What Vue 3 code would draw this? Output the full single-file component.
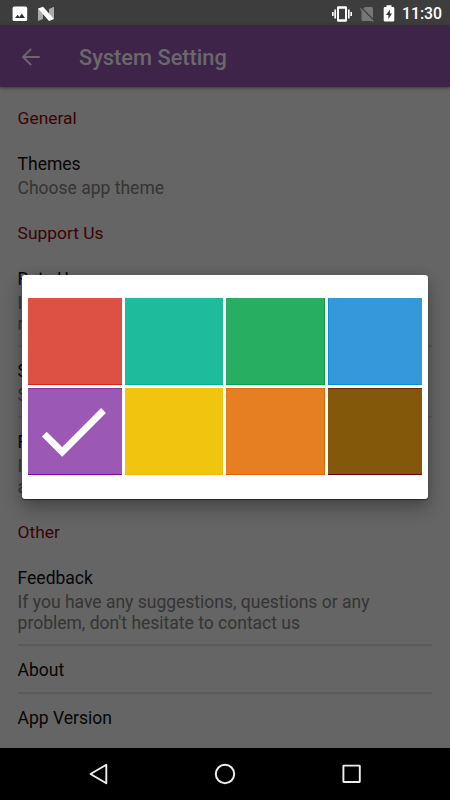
<script setup>
const sections = [
  { name: 'General', rows: [{ title: 'Themes', lines: ['Choose app theme'] }] },
  {
    name: 'Support Us',
    rows: [
      { title: 'Rate Us', lines: ['If you like this app, please', 'rate it'] },
      { title: 'Share', lines: ['Share this app'] },
      { title: 'Follow Us', lines: ['If you want news', 'about updates'] },
    ],
  },
  {
    name: 'Other',
    rows: [
      { title: 'Feedback', lines: ['If you have any suggestions, questions or any', "problem, don't hesitate to contact us"] },
      { title: 'About', lines: [] },
      { title: 'App Version', lines: [] },
    ],
  },
]
const themes = [
  { name: 'red', selected: false },
  { name: 'teal', selected: false },
  { name: 'green', selected: false },
  { name: 'blue', selected: false },
  { name: 'purple', selected: true },
  { name: 'yellow', selected: false },
  { name: 'orange', selected: false },
  { name: 'brown', selected: false },
]
</script>

<template>
  <div class="screen">
    <div class="status">
      <svg class="picture" width="16" height="16" viewBox="0 0 16 16">
        <rect x=".6" y=".6" width="14.6" height="14.4" rx="1.6" fill="#fff" />
        <path d="M3 12 5.6 8.8 7.4 11 9.8 7.6 13 12Z" fill="#333" />
      </svg>
      <svg class="nougat" width="18" height="16" viewBox="0 0 18 16">
        <path d="M1 2.5 6 6V13L1 15ZM12 3 17 .8V13L12 9.5Z" fill="#aaa" />
        <path d="M1 2.5 6 .7 17 13 12 15Z" fill="#fff" />
      </svg>
      <span class="spacer"></span>
      <svg class="vibrate" width="20" height="16" viewBox="0 0 20 16">
        <path fill-rule="evenodd" d="M6.4.2H13.6Q15 .2 15 1.6V14.4Q15 15.8 13.6 15.8H6.4Q5 15.8 5 14.4V1.6Q5 .2 6.4.2ZM7 2.8V13.2H13V2.8Z" fill="#fff" />
        <path d="M3.2 3.5V12.5M.8 6V10M16.8 3.5V12.5M19.2 6V10" stroke="#fff" stroke-width="1.7" />
      </svg>
      <svg class="sim" width="14" height="16" viewBox="0 0 14 16">
        <path d="M1.5 4.5 5 1H11.5Q13 1 13 2.5V15H3Q1.5 15 1.5 13.5Z" fill="#777" />
        <path d="M1 1.5 14 14.5" stroke="#3d3d3d" stroke-width="1.6" />
        <path d="M.3 2.5 13.3 15.5" stroke="#777" stroke-width="1.2" />
      </svg>
      <svg class="battery" width="12" height="17" viewBox="0 0 12 17">
        <path d="M3.5 2V.3H8.5V2H10Q11.3 2 11.3 3.3V15.2Q11.3 16.5 10 16.5H2Q.7 16.5.7 15.2V3.3Q.7 2 2 2Z" fill="#fff" />
        <path d="M7 4.5 3 9.9H5.4V14L9 8.5H6.8Z" fill="#333" />
      </svg>
      <span class="time">11:30</span>
    </div>
    <header class="toolbar">
      <svg width="20" height="20" viewBox="0 0 20 20">
        <path d="M18.7 10H2.5M10.2 1.8 2 10 10.2 18.2" fill="none" stroke="#6b6570" stroke-width="1.9" />
      </svg>
      <h1>System Setting</h1>
    </header>
    <main class="settings">
      <section v-for="section in sections" :key="section.name">
        <h2>{{ section.name }}</h2>
        <div v-for="row in section.rows" :key="row.title" class="row">
          <div class="title">{{ row.title }}</div>
          <div v-for="line in row.lines" :key="line" class="summary">{{ line }}</div>
        </div>
      </section>
    </main>
    <nav class="nav">
      <svg width="20" height="22" viewBox="0 0 20 22">
        <path d="M17.3 1.8V20.2L1.5 11Z" fill="none" stroke="#eee" stroke-width="1.9" stroke-linejoin="round" />
      </svg>
      <svg class="home" width="22" height="22" viewBox="0 0 22 22">
        <circle cx="11" cy="11" r="9.2" fill="none" stroke="#eee" stroke-width="2" />
      </svg>
      <svg width="20" height="20" viewBox="0 0 20 20">
        <rect x="1.4" y="1.6" width="16.4" height="16.4" rx=".4" fill="none" stroke="#eee" stroke-width="1.9" />
      </svg>
    </nav>
    <div class="dialog">
      <div v-for="theme in themes" :key="theme.name" class="swatch" :class="theme.name">
        <svg v-if="theme.selected" width="94" height="87" viewBox="0 0 94 87">
          <path d="M16.3 46.2 34.2 64 75.5 22.5" fill="none" stroke="#fff" stroke-width="6.8" />
        </svg>
      </div>
    </div>
  </div>
</template>

<style>
body {
  margin: 0;
  background: #666;
}
</style>

<style scoped>
.screen {
  position: relative;
  display: flex;
  flex-direction: column;
  width: 450px;
  height: 800px;
  overflow: hidden;
  background: #656565;
  font-family: Roboto, sans-serif;
}
.status {
  display: flex;
  align-items: center;
  box-sizing: border-box;
  height: 25px;
  flex: none;
  padding: 2px 8px 0 12px;
  background: #3d3d3d;
}
.nougat {
  margin-left: 9px;
}
.spacer {
  flex: 1;
}
.sim {
  margin-left: 8px;
}
.battery {
  margin-left: 9px;
}
.time {
  margin-left: 7px;
  color: #fff;
  font-size: 15.8px;
  font-weight: 500;
  line-height: 20px;
  width: 40px;
  white-space: nowrap;
}
.toolbar {
  display: flex;
  align-items: center;
  box-sizing: border-box;
  height: 62px;
  flex: none;
  padding: 2px 20px 0 21px;
  background: #3e2449;
  box-shadow: 0 1px 3px rgba(0, 0, 0, 0.45);
}
h1 {
  margin: 2px 0 0 38px;
  color: #6b686c;
  font-size: 21.8px;
  font-weight: 500;
  line-height: 28px;
}
.settings {
  flex: 1;
  min-height: 0;
  overflow: hidden;
  padding: 7px 18px 0 17.6px;
}
h2 {
  box-sizing: border-box;
  height: 46px;
  margin: 0;
  padding-top: 2px;
  color: #3b0303;
  font-size: 17.4px;
  font-weight: 400;
  line-height: 44px;
}
.row {
  padding: 13px 0 10px;
  white-space: nowrap;
}
.row + .row {
  border-top: 2px solid #5b5b5b;
}
.title {
  color: #060606;
  font-size: 17.5px;
  line-height: 23px;
}
.title + .summary {
  margin-top: 2px;
}
.summary {
  color: #343434;
  font-size: 17.5px;
  line-height: 21px;
}
.nav {
  display: flex;
  align-items: center;
  justify-content: space-between;
  box-sizing: border-box;
  height: 52px;
  flex: none;
  padding: 0 88px 0 89px;
  background: #000;
}
.home {
  margin-right: 1px;
}
.dialog {
  position: absolute;
  top: 275px;
  left: 22px;
  display: grid;
  grid-template-columns: 94px 98px 99px 94px;
  grid-template-rows: 87px 87px;
  gap: 3px;
  box-sizing: border-box;
  width: 406px;
  height: 224px;
  padding: 23px 6px;
  border-radius: 3px;
  background: #fff;
  box-shadow: 0 1px 1px rgba(0, 0, 0, 0.5), 0 10px 18px rgba(0, 0, 0, 0.27), 0 0 12px rgba(0, 0, 0, 0.12);
}
.swatch {
  box-sizing: border-box;
}
.swatch svg {
  display: block;
}
.red {
  background: #dd5044;
  box-shadow: inset 0 -1px #dc2410;
}
.teal {
  background: #1cbc9c;
  box-shadow: inset 0 -1px #08b18b;
}
.green {
  background: #28ae61;
  box-shadow: inset -1px -1px #08a33b;
}
.blue {
  background: #3598db;
  box-shadow: inset 1px -1px #078cdc;
}
.purple {
  background: #9b59b5;
  box-shadow: inset 0 -1px #8000a0, inset 0 1px #8d35ac;
}
.yellow {
  background: #f1c40f;
  box-shadow: inset 0 -1px #f0bb00;
}
.orange {
  background: #e67f22;
  box-shadow: inset -1px -1px #e36500, inset 0 1px #e36b09;
}
.brown {
  background: #83580a;
  box-shadow: inset 0 -1px #680000, inset 0 1px #6d2400;
}
</style>
